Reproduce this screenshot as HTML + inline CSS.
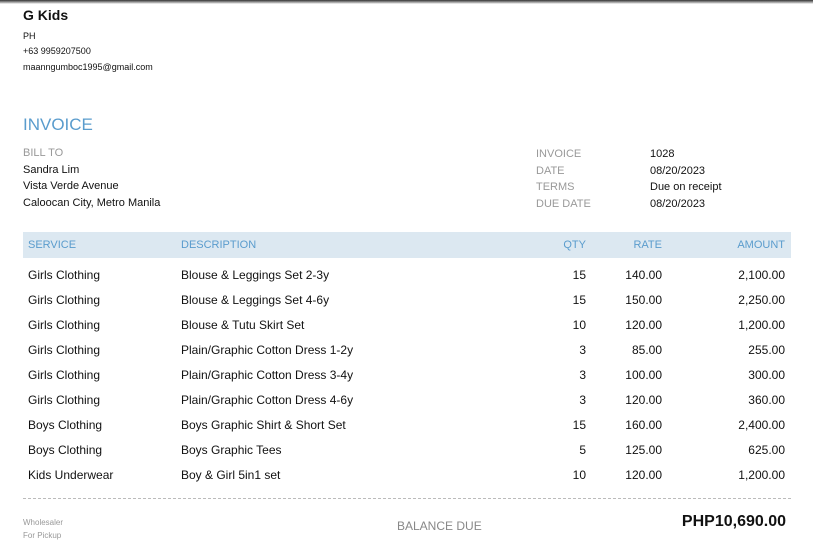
<!DOCTYPE html>
<html><head><meta charset="utf-8"><style>
*{margin:0;padding:0;box-sizing:border-box}
body{width:813px;height:550px;background:#fff;font-family:"Liberation Sans",sans-serif;position:relative;overflow:hidden;color:#111}
.a{position:absolute;white-space:nowrap}
.g{color:#999}
.b{color:#5a9ccd}
.r{text-align:right}
</style></head><body>
<div class="a" style="left:0;top:0;width:813px;height:4px;background:linear-gradient(#333,#bbb 70%,#fff)"></div>
<div class="a" style="left:23px;top:7px;font-size:14px;font-weight:bold">G Kids</div>
<div class="a" style="left:23px;top:31px;font-size:9px">PH</div>
<div class="a" style="left:23px;top:46px;font-size:9px">+63 9959207500</div>
<div class="a" style="left:23px;top:62px;font-size:9px">maanngumboc1995@gmail.com</div>
<div class="a b" style="left:23px;top:115px;font-size:17px">INVOICE</div>
<div class="a g" style="left:23px;top:147px;font-size:11px">BILL TO</div>
<div class="a" style="left:23px;top:164px;font-size:11px">Sandra Lim</div>
<div class="a" style="left:23px;top:180px;font-size:11px">Vista Verde Avenue</div>
<div class="a" style="left:23px;top:197px;font-size:11px">Caloocan City, Metro Manila</div>
<div class="a g" style="left:536px;top:146px;font-size:11px;line-height:16.7px">INVOICE<br>DATE<br>TERMS<br>DUE DATE</div>
<div class="a" style="left:650px;top:146px;font-size:11px;line-height:16.7px">1028<br>08/20/2023<br>Due on receipt<br>08/20/2023</div>
<div class="a" style="left:23px;top:232px;width:768px;height:26px;background:#dce8f1"></div>
<div class="a b" style="left:28px;top:239px;font-size:11px">SERVICE</div>
<div class="a b" style="left:181px;top:239px;font-size:11px">DESCRIPTION</div>
<div class="a b r" style="left:500px;width:86px;top:239px;font-size:11px">QTY</div>
<div class="a b r" style="left:580px;width:82px;top:239px;font-size:11px">RATE</div>
<div class="a b r" style="left:680px;width:105px;top:239px;font-size:11px">AMOUNT</div>
<div class="a" style="left:28px;top:263px;font-size:12px;line-height:25px">Girls Clothing<br>Girls Clothing<br>Girls Clothing<br>Girls Clothing<br>Girls Clothing<br>Girls Clothing<br>Boys Clothing<br>Boys Clothing<br>Kids Underwear</div>
<div class="a" style="left:181px;top:263px;font-size:12px;line-height:25px">Blouse &amp; Leggings Set 2-3y<br>Blouse &amp; Leggings Set 4-6y<br>Blouse &amp; Tutu Skirt Set<br>Plain/Graphic Cotton Dress 1-2y<br>Plain/Graphic Cotton Dress 3-4y<br>Plain/Graphic Cotton Dress 4-6y<br>Boys Graphic Shirt &amp; Short Set<br>Boys Graphic Tees<br>Boy &amp; Girl 5in1 set</div>
<div class="a r" style="left:500px;width:86px;top:263px;font-size:12px;line-height:25px">15<br>15<br>10<br>3<br>3<br>3<br>15<br>5<br>10</div>
<div class="a r" style="left:580px;width:82px;top:263px;font-size:12px;line-height:25px">140.00<br>150.00<br>120.00<br>85.00<br>100.00<br>120.00<br>160.00<br>125.00<br>120.00</div>
<div class="a r" style="left:680px;width:105px;top:263px;font-size:12px;line-height:25px">2,100.00<br>2,250.00<br>1,200.00<br>255.00<br>300.00<br>360.00<br>2,400.00<br>625.00<br>1,200.00</div>
<div class="a" style="left:23px;top:498px;width:768px;border-top:1px dashed #bbb"></div>
<div class="a g" style="left:23px;top:516px;font-size:8px;line-height:13px">Wholesaler<br>For Pickup</div>
<div class="a g" style="left:397px;top:519px;font-size:12px;color:#888">BALANCE DUE</div>
<div class="a r" style="left:600px;width:186px;top:513px;font-size:16px;font-weight:bold">PHP10,690.00</div>
</body></html>
